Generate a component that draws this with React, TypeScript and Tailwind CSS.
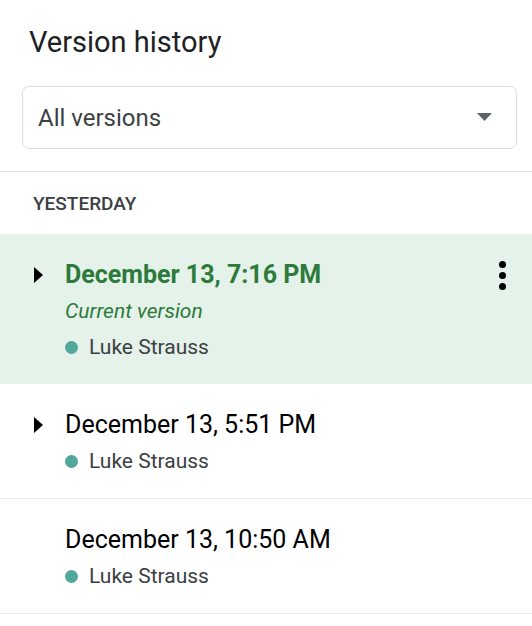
import React from "react";

type Version = {
  time: string;
  author: string;
  current?: boolean;
  expandable?: boolean;
};

const versions: Version[] = [
  { time: "December 13, 7:16 PM", author: "Luke Strauss", current: true, expandable: true },
  { time: "December 13, 5:51 PM", author: "Luke Strauss", expandable: true },
  { time: "December 13, 10:50 AM", author: "Luke Strauss" },
];

function Caret() {
  return (
    <svg width="9" height="16" viewBox="0 0 9 16" className="block">
      <path d="M0 0 L9 8 L0 16 Z" fill="#000" />
    </svg>
  );
}

function Kebab() {
  return (
    <svg width="7" height="29" viewBox="0 0 7 29" className="block">
      <circle cx="3.5" cy="3.5" r="3.5" fill="#000" />
      <circle cx="3.5" cy="14.5" r="3.5" fill="#000" />
      <circle cx="3.5" cy="25.5" r="3.5" fill="#000" />
    </svg>
  );
}

function VersionRow({ v }: { v: Version }) {
  return (
    <div
      className={`flex pl-[34px] pr-[26px] pt-[23px] pb-[19px] ${
        v.current ? "bg-[#e5f2ea]" : "bg-white border-b border-[#e8eaed]"
      }`}
    >
      <div className="w-[31px] h-[36px] flex items-center shrink-0">
        {v.expandable && <Caret />}
      </div>
      <div className="flex-1 flex flex-col">
        <div
          className={`text-[25px] leading-[36px] ${
            v.current ? "font-bold text-[#2d7a3a]" : "text-black"
          }`}
        >
          {v.time}
        </div>
        {v.current && (
          <div className="mt-[1px] text-[21px] leading-[35px] italic text-[#2d7a3a]">
            Current version
          </div>
        )}
        <div className="mt-[1px] flex items-center gap-[11px] text-[21px] leading-[35px] text-[#3c4043]">
          <span className="w-[13px] h-[13px] rounded-full bg-[#52a79b] shrink-0" />
          <span>{v.author}</span>
        </div>
      </div>
      {v.current && (
        <div className="h-[36px] flex items-center">
          <Kebab />
        </div>
      )}
    </div>
  );
}

export default function App() {
  return (
    <div
      className="w-[532px] h-[626px] bg-white overflow-hidden"
      style={{ fontFamily: "Roboto, 'Liberation Sans', sans-serif" }}
    >
      <div className="pt-[24px] pl-[29px] text-[29px] leading-[36px] text-[#202124]">
        Version history
      </div>

      <div className="mt-[26px] ml-[22px] mr-[15px] h-[63px] rounded-[7px] border border-[#dadce0] flex items-center pl-[15px] pr-[24px]">
        <span className="flex-1 text-[24px] text-[#3c4043]">All versions</span>
        <svg width="15" height="8" viewBox="0 0 15 8" className="block mt-[-1px]">
          <path d="M0 0 L15 0 L7.5 8 Z" fill="#5f6368" />
        </svg>
      </div>

      <div className="mt-[22px] h-px bg-[#e3e3e3]" />

      <div className="pt-[20px] pb-[18px] pl-[33px] text-[19px] leading-[24px] font-medium text-[#3c4043]">
        YESTERDAY
      </div>

      <div className="flex flex-col">
        {versions.map((v) => (
          <VersionRow key={v.time} v={v} />
        ))}
      </div>
    </div>
  );
}
